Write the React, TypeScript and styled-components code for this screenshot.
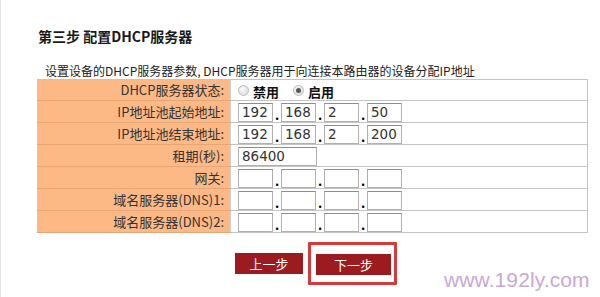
import { Fragment } from 'react';
import styled, { createGlobalStyle } from 'styled-components';

const GlobalStyle = createGlobalStyle`
    html, body {
        margin: 0;
        padding: 0;
        background: #fff;
    }
    body {
        width: 600px;
        height: 297px;
        overflow: hidden;
        font-family: "Noto Sans CJK SC", "DejaVu Sans", sans-serif;
    }
`;

const Page = styled.div`
    position: relative;
    width: 600px;
    height: 297px;
    padding: 27px 0 0 36px;
    box-sizing: border-box;
    border-left: 1px solid #e4e4e4;
`;

const Title = styled.h2`
    margin: 0 0 0 1px;
    font-size: 14px;
    line-height: 18px;
    font-weight: bold;
    color: #1a1a1a;
`;

const Intro = styled.p`
    margin: 18px 0 0 8px;
    font-size: 12px;
    line-height: 16px;
    color: #222;
    white-space: nowrap;
`;

const Form = styled.table`
    width: 551px;
    border-collapse: collapse;
    border-top: 1px solid #c4c4c4;
    font-size: 13px;
`;

const Row = styled.tr<{ $first?: boolean }>`
    height: ${p => (p.$first ? '20px' : '22px')};
`;

const Label = styled.td`
    width: 187px;
    padding: 0 6px 0 0;
    background: #fcb985;
    border-bottom: 1px solid #e6a676;
    text-align: right;
    color: #333;
    white-space: nowrap;
    line-height: 16px;
`;

const Value = styled.td`
    padding: 0 0 0 7px;
    border-left: 1px solid #d0d0d0;
    border-right: 1px solid #c4c4c4;
    border-bottom: 1px solid #c4c4c4;
    vertical-align: middle;
`;

const Fields = styled.div`
    display: flex;
    align-items: flex-end;
    height: 21px;
`;

const Box = styled.div<{ $wide?: boolean }>`
    width: ${p => (p.$wide ? '79px' : '35px')};
    height: 19px;
    box-sizing: border-box;
    border: 1px solid #b0b0b0;
    border-top-color: #8c8c8c;
    padding-left: 3px;
    font-family: "DejaVu Sans", sans-serif;
    font-size: 13.5px;
    line-height: 17px;
    color: #333;
    background: #fff;
`;

const Dot = styled.span`
    width: 8px;
    text-align: center;
    font-weight: bold;
    font-size: 13px;
    line-height: 14px;
    color: #000;
`;

const Radios = styled.div`
    display: flex;
    align-items: center;
    gap: 4px;
    height: 20px;
`;

const Radio = styled.span<{ $on?: boolean }>`
    position: relative;
    width: 11px;
    height: 11px;
    border-radius: 50%;
    box-sizing: border-box;
    border: 1px solid #bdbdbd;
    background: radial-gradient(circle at 40% 35%, #fafafa, #d6d6d6);
    margin-left: ${p => (p.$on ? '10px' : '0')};

    &::after {
        content: '';
        display: ${p => (p.$on ? 'block' : 'none')};
        position: absolute;
        left: 2px;
        top: 2px;
        width: 5px;
        height: 5px;
        border-radius: 50%;
        background: #555;
    }
`;

const Choice = styled.span`
    font-weight: bold;
    font-size: 13px;
    color: #111;
    margin-top: 2px;
`;

const Actions = styled.div`
    display: flex;
    align-items: center;
    width: 551px;
    margin-top: 9px;
    padding-left: 198px;
    box-sizing: border-box;
`;

const Button = styled.button<{ $w: number }>`
    width: ${p => p.$w}px;
    height: 21px;
    padding: 0;
    border: none;
    background: #9c1b1f;
    color: #fff;
    font-family: "Noto Sans CJK SC", sans-serif;
    font-size: 13px;
    line-height: 21px;
`;

const Highlight = styled.div`
    margin-left: 5px;
    padding: 6px 3px 7px 5px;
    border: 3px solid #d63a3c;
    border-radius: 1px;
`;

const Watermark = styled.div`
    position: absolute;
    left: 443px;
    top: 268px;
    font-family: "Liberation Sans", Arial, sans-serif;
    font-size: 21px;
    color: #c9a8d4;
    letter-spacing: 0.1px;
`;

type Ip = [string, string, string, string];

const rows: { label: string; ip?: Ip; lease?: string }[] = [
    { label: 'IP地址池起始地址:', ip: ['192', '168', '2', '50'] },
    { label: 'IP地址池结束地址:', ip: ['192', '168', '2', '200'] },
    { label: '租期(秒):', lease: '86400' },
    { label: '网关:', ip: ['', '', '', ''] },
    { label: '域名服务器(DNS)1:', ip: ['', '', '', ''] },
    { label: '域名服务器(DNS)2:', ip: ['', '', '', ''] },
];

function IpFields({ ip }: { ip: Ip }) {
    return (
        <Fields>
            {ip.map((part, i) => (
                <Fragment key={i}>
                    {i > 0 && <Dot>.</Dot>}
                    <Box>{part}</Box>
                </Fragment>
            ))}
        </Fields>
    );
}

export default function App() {
    return (
        <>
            <GlobalStyle />
            <Page>
                <Title>第三步 配置DHCP服务器</Title>
                <Intro>设置设备的DHCP服务器参数, DHCP服务器用于向连接本路由器的设备分配IP地址</Intro>
                <Form>
                    <tbody>
                        <Row $first>
                            <Label>DHCP服务器状态:</Label>
                            <Value>
                                <Radios>
                                    <Radio />
                                    <Choice>禁用</Choice>
                                    <Radio $on />
                                    <Choice>启用</Choice>
                                </Radios>
                            </Value>
                        </Row>
                        {rows.map(r => (
                            <Row key={r.label}>
                                <Label>{r.label}</Label>
                                <Value>
                                    {r.ip ? (
                                        <IpFields ip={r.ip} />
                                    ) : (
                                        <Fields>
                                            <Box $wide>{r.lease}</Box>
                                        </Fields>
                                    )}
                                </Value>
                            </Row>
                        ))}
                    </tbody>
                </Form>
                <Actions>
                    <Button $w={68}>上一步</Button>
                    <Highlight>
                        <Button $w={75}>下一步</Button>
                    </Highlight>
                </Actions>
                <Watermark>www.192ly.com</Watermark>
            </Page>
        </>
    );
}
